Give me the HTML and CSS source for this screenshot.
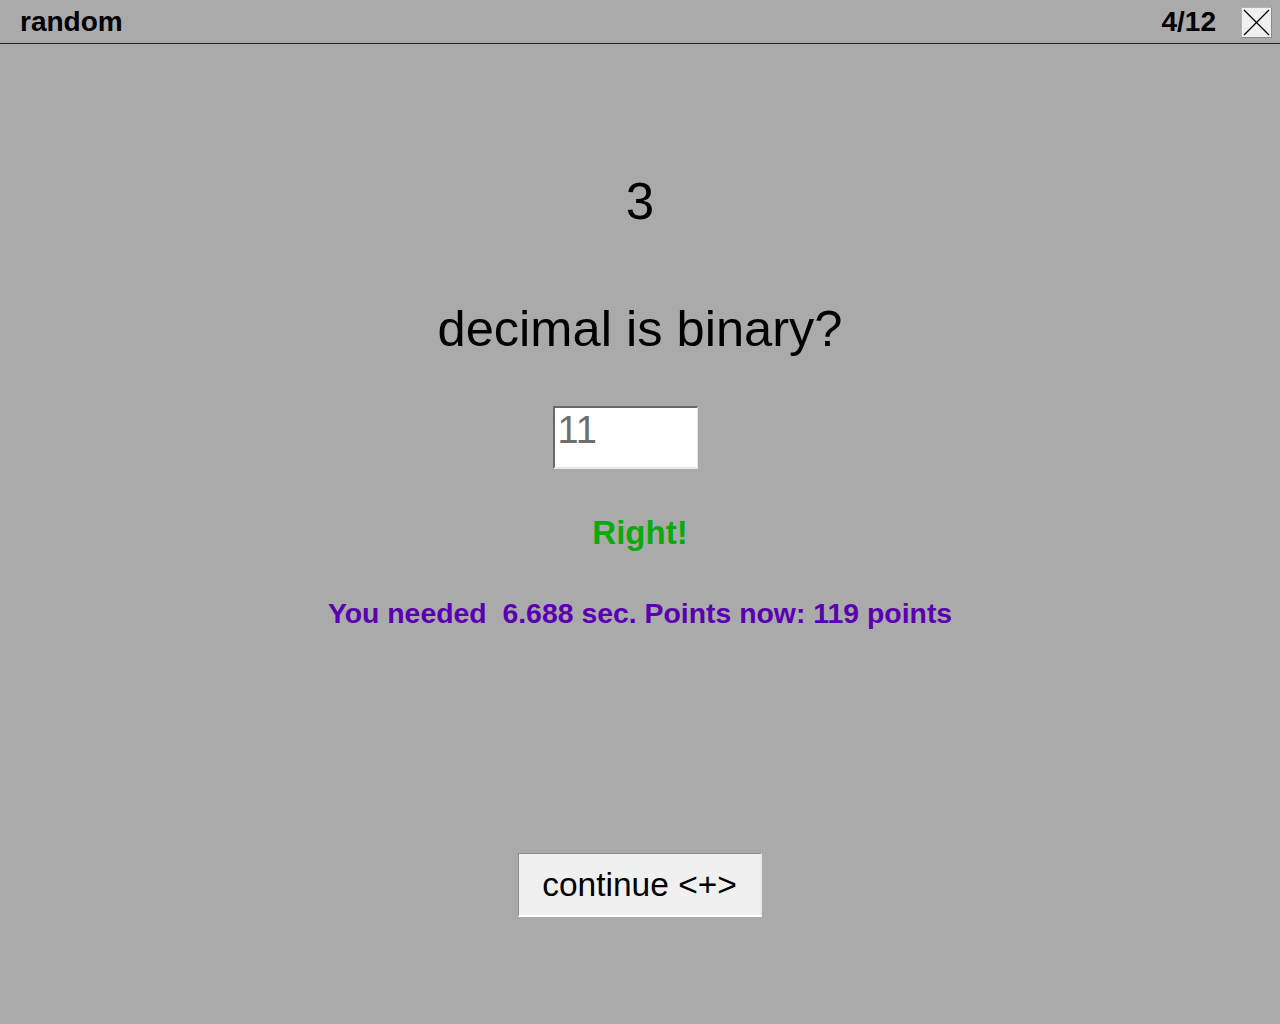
FILE: index.html
```html
<!DOCTYPE html>
<html lang="en">
<head>
<meta charset="utf-8">
<title>random</title>
<link rel="stylesheet" href="styles.css">
</head>
<body>
<header class="topbar">
  <div class="title">random</div>
  <div class="right">
    <div class="counter">4/12</div>
    <button class="close" aria-label="close">
      <svg width="29" height="29" viewBox="0 0 29 29"><line x1="2" y1="2" x2="27" y2="27" stroke="#000" stroke-width="1.2"/><line x1="27" y1="2" x2="2" y2="27" stroke="#000" stroke-width="1.2"/></svg>
    </button>
  </div>
</header>
<main class="quiz">
  <div class="number">3</div>
  <div class="question">decimal is binary?</div>
  <input class="answer" type="text" value="11" readonly>
  <div class="result">Right!</div>
  <div class="stats">You needed&nbsp; 6.688 sec. Points now: 119 points</div>
  <button class="continue">continue &lt;+&gt;</button>
</main>
</body>
</html>
```
FILE: styles.css
```css
html, body {
  margin: 0;
  padding: 0;
  background: #aaaaaa;
  font-family: "Liberation Sans", Arial, sans-serif;
  color: #000;
}
.topbar {
  display: flex;
  justify-content: space-between;
  align-items: center;
  height: 43px;
  border-bottom: 1px solid #222;
  padding: 0 8px 0 20px;
}
.title, .counter {
  font-size: 28px;
  font-weight: bold;
  line-height: 43px;
}
.right {
  display: flex;
  align-items: center;
  gap: 25px;
}
.close {
  width: 31px;
  height: 31px;
  padding: 0;
  margin: 2px 0 0 0;
  background: #f0f0f0;
  border: 1px solid #b4b4b4;
  border-bottom-color: #8a8a8a;
  border-right-color: #8a8a8a;
  display: flex;
  align-items: center;
  justify-content: center;
}
.close svg { display: block; }
.quiz {
  display: flex;
  flex-direction: column;
  align-items: center;
}
.number {
  margin-top: 133px;
  font-size: 51px;
  line-height: 50px;
}
.question {
  margin-top: 77px;
  font-size: 50.6px;
  line-height: 50px;
}
.answer {
  margin-top: 52px;
  margin-right: 30px;
  box-sizing: border-box;
  width: 145px;
  height: 63px;
  padding: 3px 3px 18px 3px;
  font-family: "Liberation Sans", Arial, sans-serif;
  font-size: 38px;
  line-height: 38px;
  color: #6e6e6e;
  background: #fff;
  border-style: solid;
  border-width: 2px 1px 2px 2px;
  border-color: #6a6a6a #e6e6e6 #e6e6e6 #6a6a6a;
  outline: none;
}
.result {
  margin-top: 47px;
  font-size: 33px;
  line-height: 33px;
  font-weight: bold;
  color: #0aaa0a;
}
.stats {
  margin-top: 50px;
  font-size: 28.4px;
  line-height: 28px;
  font-weight: bold;
  color: #5a00b0;
}
.continue {
  margin-top: 226px;
  box-sizing: border-box;
  width: 244px;
  height: 64px;
  font-family: "Liberation Sans", Arial, sans-serif;
  font-size: 33.5px;
  color: #000;
  background: #f0f0f0;
  border-style: solid;
  border-width: 1px 2px 2px 1px;
  border-color: #8c8c8c #e8e8e8 #ffffff #8c8c8c;
  padding: 0;
}
```
